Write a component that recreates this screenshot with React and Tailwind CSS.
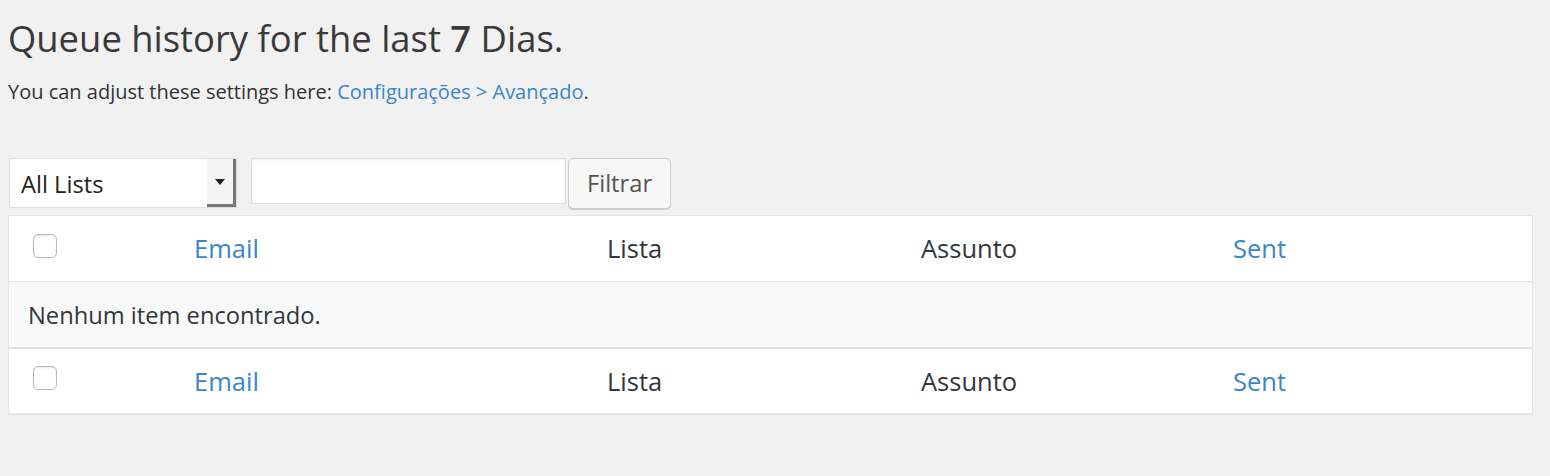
const LINK = 'text-[#3b86c8]'

function HeaderRow({ bottom }) {
  return (
    <div className={`grid grid-cols-[167px_413px_314px_312px_1fr] items-center h-[66px] bg-white text-[25.5px] ${bottom ? 'border-t-2 border-[#e1e1e1]' : 'border-b border-[#e1e1e1]'}`}>
      <div className="pl-[24px] flex items-center -mt-[6px]">
        <span className="block w-[24px] h-[24px] rounded-[5px] border border-[#b4b9be] bg-white shadow-[inset_0_1px_2px_rgba(0,0,0,0.1)]" />
      </div>
      <div className={`pl-[18px] ${LINK}`}>Email</div>
      <div className="pl-[18px]">Lista</div>
      <div className="pl-[18px]">Assunto</div>
      <div className={`pl-[18px] ${LINK}`}>Sent</div>
    </div>
  )
}

export default function App() {
  return (
    <div className="min-h-[476px] bg-[#f1f1f1] px-2 text-[#32373c] font-['Open_Sans',sans-serif]">
      <h1 className="pt-[14px] text-[36.4px] leading-[48px] text-[#3a3a3a]">Queue history for the last <b className="font-semibold">7</b> Dias.</h1>
      <p className="mt-[16px] text-[20px] leading-[28px] text-[#333]">
        You can adjust these settings here: <a className={LINK}>Configurações &gt; Avançado</a>.
      </p>

      <div className="mt-[52px] flex items-start">
        <div className="ml-px w-[228px] h-[50px] flex bg-white border border-[#dddddd]">
          <span className="flex-1 pl-[11px] pt-[3px] flex items-center text-[23.7px] text-[#222]">All Lists</span>
          <span className="w-[29px] h-full flex items-center justify-center bg-[#f4f4f4] border-r-[3px] border-b-[3px] border-[#777]">
            <svg width="10" height="6" viewBox="0 0 10 6"><path d="M0 0h10L5 6z" fill="#222" /></svg>
          </span>
        </div>
        <div className="ml-[14px] w-[315px] h-[46px] bg-white border border-[#dddddd] shadow-[inset_0_1px_2px_rgba(0,0,0,0.07)]" />
        <button className="ml-[2px] w-[103px] h-[51px] rounded-[5px] border border-[#cccccc] bg-[#f7f7f7] shadow-[0_1px_0_#cccccc] text-[23.7px] text-[#555]">Filtrar</button>
      </div>

      <div className="mt-[6px] w-[1525px] border border-[#e5e5e5] shadow-[0_1px_1px_rgba(0,0,0,0.04)]">
        <HeaderRow />
        <div className="h-[65px] flex items-center pl-[19px] pt-[3px] bg-[#f9f9f9] text-[23.7px]">Nenhum item encontrado.</div>
        <HeaderRow bottom />
      </div>
    </div>
  )
}
